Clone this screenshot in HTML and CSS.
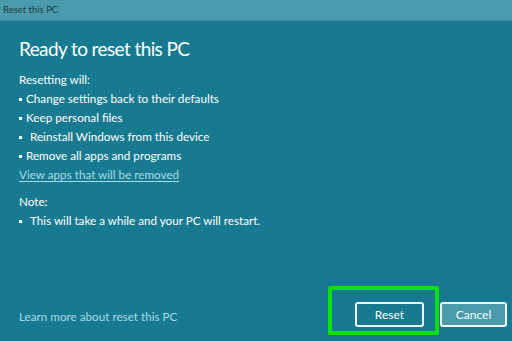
FILE: index.html
```html
<!DOCTYPE html>
<html>
<head>
<meta charset="utf-8">
<link rel="stylesheet" href="styles.css">
</head>
<body>
<div class="window">
  <div class="titlebar">Reset this PC</div>
  <div class="content">
    <h1 class="heading">Ready to reset this PC</h1>
    <div class="text">Resetting will:</div>
    <ul class="list">
      <li>Change settings back to their defaults</li>
      <li>Keep personal files</li>
      <li class="indent">Reinstall Windows from this device</li>
      <li>Remove all apps and programs</li>
    </ul>
    <a class="link" href="#">View apps that will be removed</a>
    <div class="text note">Note:</div>
    <ul class="list">
      <li class="indent">This will take a while and your PC will restart.</li>
    </ul>
    <div class="footer">
      <a class="learn" href="#">Learn more about reset this PC</a>
      <div class="buttons">
        <button class="btn btn-reset">Reset</button>
        <button class="btn btn-cancel">Cancel</button>
        <div class="highlight"></div>
      </div>
    </div>
  </div>
</div>
</body>
</html>
```

FILE: styles.css
```css
* { box-sizing: border-box; }
html, body { margin: 0; padding: 0; }
body {
  width: 512px;
  height: 341px;
  overflow: hidden;
  background: #187a90;
  font-family: "Lato", "Noto Sans", sans-serif;
  color: #ffffff;
}
.window { display: flex; flex-direction: column; height: 341px; }
.titlebar {
  height: 21px;
  background: #4a9cac;
  border-bottom: 1px solid #3a8a9c;
  color: #1d3a42;
  font-size: 9.5px;
  line-height: 20px;
  padding-left: 3px;
}
.content {
  flex: 1;
  display: flex;
  flex-direction: column;
  padding: 14px 0 0 19px;
}
.heading {
  margin: 0 0 7px;
  font-weight: normal;
  font-size: 19px;
  line-height: 28px;
  letter-spacing: -0.6px;
}
.text { font-size: 11.7px; line-height: 19px; }
.note { margin-top: 8px; }
.list { list-style: none; margin: 0; padding: 0; font-size: 11.7px; line-height: 19px; }
.list li { position: relative; padding-left: 7px; }
.list li::before {
  content: "";
  position: absolute;
  left: 0;
  top: 9px;
  width: 3px;
  height: 3px;
  background: #ffffff;
}
.list li.indent { padding-left: 11px; }
.link {
  font-size: 11.7px;
  line-height: 19px;
  color: #a6dbe6;
  text-decoration: underline;
  text-underline-offset: 2px;
  align-self: flex-start;
}
.footer {
  margin-top: auto;
  height: 39px;
  display: flex;
  align-items: flex-start;
  justify-content: space-between;
  padding-right: 5px;
}
.learn {
  font-size: 11.7px;
  line-height: 19px;
  color: #a6dbe6;
  text-decoration: none;
  margin-top: 5px;
}
.buttons { position: relative; display: flex; gap: 16px; }
.btn {
  height: 25px;
  border: 2px solid #f2f8fa;
  border-radius: 3px;
  color: #ffffff;
  font-family: inherit;
  font-size: 12px;
  padding: 0;
}
.btn-reset { width: 69px; background: #187a90; }
.btn-cancel { width: 67px; background: #4a9cac; }
.highlight {
  position: absolute;
  left: -27px;
  top: -16px;
  width: 111px;
  height: 49px;
  border: 4px solid #10e010;
  border-radius: 2px;
}
```
